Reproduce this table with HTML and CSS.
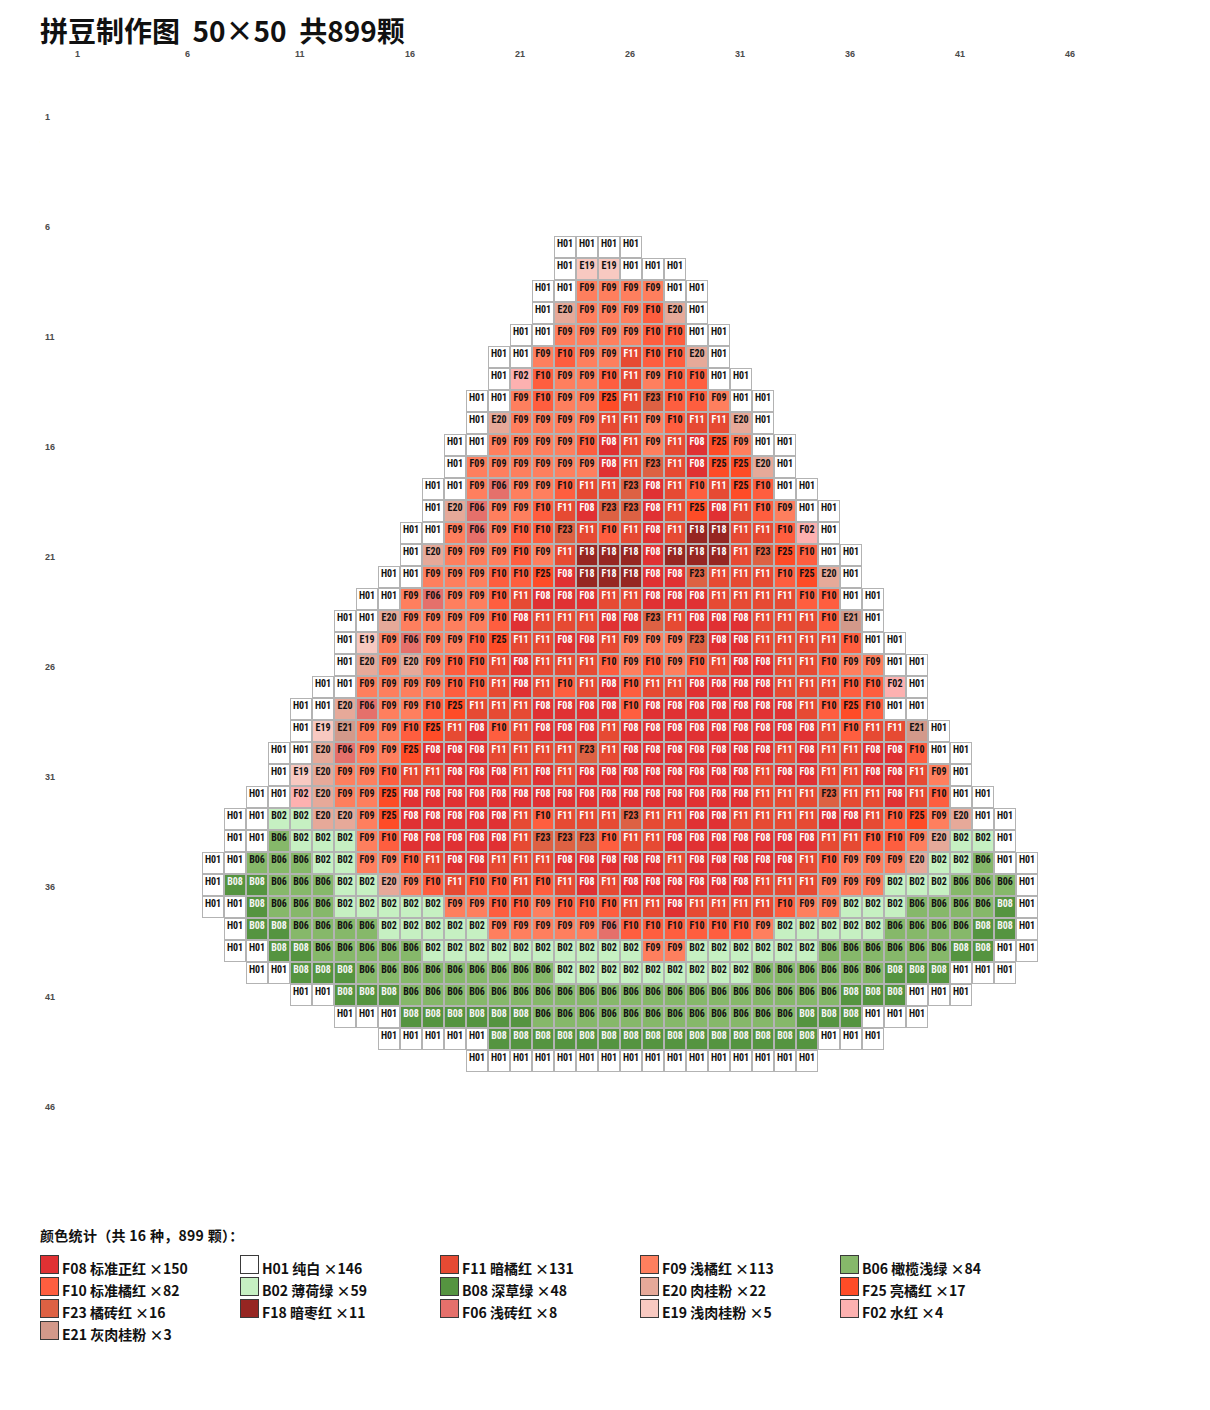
FILE: index.html
```html
<!DOCTYPE html>
<html lang="zh-CN">
<head>
<meta charset="utf-8">
<title>拼豆制作图</title>
<link rel="stylesheet" href="styles.css">
</head>
<body>
<main class="page">
  <h1 class="title">拼豆制作图  <span class="num">50×50</span>  共<span class="num">899</span>颗</h1>
  <div class="col-labels" id="colLabels"></div>
  <div class="board">
    <div class="row-labels" id="rowLabels"></div>
    <div class="grid" id="grid"></div>
  </div>
  <section class="legend">
    <h2 class="legend-title">颜色统计（共 16 种，899 颗）：</h2>
    <ul class="legend-list" id="legend"></ul>
  </section>
</main>
<script src="app.js"></script>
</body>
</html>
```

FILE: styles.css
```css
body {
  margin: 0;
  background: #ffffff;
  color: #111111;
  font-family: "Noto Sans CJK SC", "Noto Sans", sans-serif;
}

.page {
  padding: 14px 0 0 40px;
  width: 1140px;
}

.title {
  margin: 0;
  padding-top: 3px;
  height: 31px;
  font-family: "Liberation Sans", "Noto Sans CJK SC", sans-serif;
  font-size: 28px;
  line-height: 30px;
  font-weight: 700;
  color: #111111;
  white-space: pre;
  word-spacing: -1.5px;
}

.title .num {
  font-family: "Noto Sans CJK SC", "Noto Sans", sans-serif;
  line-height: 26px;
}

.col-labels {
  display: flex;
  margin-left: 30px;
  height: 12px;
}

.col-label {
  width: 110px;
  flex: none;
  box-sizing: border-box;
  padding-left: 5px;
  font: 700 9px/12px "Liberation Sans", sans-serif;
  color: #4a4a4a;
}

.board {
  display: flex;
  margin-top: 44px;
}

.row-labels {
  width: 30px;
  flex: none;
  display: flex;
  flex-direction: column;
}

.row-label {
  height: 110px;
  box-sizing: border-box;
  padding: 2px 0 0 5px;
  font: 700 9px/22px "Liberation Sans", sans-serif;
  color: #4a4a4a;
}

.grid {
  display: grid;
  grid-template-columns: repeat(50, 22px);
  grid-auto-rows: 22px;
}

.cell {
  box-sizing: border-box;
  border: 1px solid #b3b3b3;
  font-family: "Liberation Sans Narrow", "Arial Narrow", "Roboto Condensed", "Liberation Sans", sans-serif;
  font-size: 10px;
  font-weight: 700;
  line-height: 13px;
  text-align: center;
  color: #111111;
  overflow: hidden;
  white-space: nowrap;
}

.cell.empty {
  border-color: transparent;
}

.c-F08 { background: #e03133; color: #ffffff; }
.c-H01 { background: #ffffff; }
.c-F11 { background: #e64a33; color: #ffffff; }
.c-F09 { background: #fe7f5e; }
.c-B06 { background: #86b86a; }
.c-F10 { background: #fe5e3f; }
.c-B02 { background: #c6f0c2; }
.c-B08 { background: #559440; color: #f4f4f4; }
.c-E20 { background: #e6a999; }
.c-F25 { background: #fe4c27; }
.c-F23 { background: #dd6143; }
.c-F18 { background: #962622; color: #ffffff; }
.c-F06 { background: #e5706b; }
.c-E19 { background: #f8c9c1; }
.c-F02 { background: #fdb1b0; }
.c-E21 { background: #d3998a; }

.legend {
  margin-top: 21px;
}

.legend-title {
  margin: 0 0 9px;
  font-size: 14px;
  line-height: 20px;
  font-weight: 700;
  letter-spacing: 0.3px;
}

.legend-list {
  list-style: none;
  margin: 0;
  padding: 0;
  display: grid;
  grid-template-columns: repeat(5, 200px);
  grid-auto-rows: 22px;
}

.legend-item {
  display: flex;
  align-items: flex-start;
  font-size: 14px;
  font-weight: 700;
  white-space: nowrap;
}

.swatch {
  width: 19px;
  height: 19px;
  flex: none;
  box-sizing: border-box;
  margin-top: 1px;
  border: 1px solid #3a3a3a;
}

.legend-text {
  margin-left: 3px;
  padding-top: 6px;
  line-height: 16px;
}
```

FILE: app.js
```js
(function () {
  var PALETTE = [
    ["F08", "标准正红", 150], ["H01", "纯白", 146], ["F11", "暗橘红", 131], ["F09", "浅橘红", 113],
    ["B06", "橄榄浅绿", 84], ["F10", "标准橘红", 82], ["B02", "薄荷绿", 59], ["B08", "深草绿", 48],
    ["E20", "肉桂粉", 22], ["F25", "亮橘红", 17], ["F23", "橘砖红", 16], ["F18", "暗枣红", 11],
    ["F06", "浅砖红", 8], ["E19", "浅肉桂粉", 5], ["F02", "水红", 4], ["E21", "灰肉桂粉", 3]
  ];

  var ROWS = [
    [7, 23, "H01 H01 H01 H01"],
    [8, 23, "H01 E19 E19 H01 H01 H01"],
    [9, 22, "H01 H01 F09 F09 F09 F09 H01 H01"],
    [10, 22, "H01 E20 F09 F09 F09 F10 E20 H01"],
    [11, 21, "H01 H01 F09 F09 F09 F09 F10 F10 H01 H01"],
    [12, 20, "H01 H01 F09 F10 F09 F09 F11 F10 F10 E20 H01"],
    [13, 20, "H01 F02 F10 F09 F09 F10 F11 F09 F10 F10 H01 H01"],
    [14, 19, "H01 H01 F09 F10 F09 F09 F25 F11 F23 F10 F10 F09 H01 H01"],
    [15, 19, "H01 E20 F09 F09 F09 F09 F11 F11 F09 F10 F11 F11 E20 H01"],
    [16, 18, "H01 H01 F09 F09 F09 F09 F10 F08 F11 F09 F11 F08 F25 F09 H01 H01"],
    [17, 18, "H01 F09 F09 F09 F09 F09 F09 F08 F11 F23 F11 F08 F25 F25 E20 H01"],
    [18, 17, "H01 H01 F09 F06 F09 F09 F10 F11 F11 F23 F08 F11 F10 F11 F25 F10 H01 H01"],
    [19, 17, "H01 E20 F06 F09 F09 F10 F11 F08 F23 F23 F08 F11 F25 F08 F11 F10 F09 H01 H01"],
    [20, 16, "H01 H01 F09 F06 F09 F10 F10 F23 F11 F10 F11 F08 F11 F18 F18 F11 F11 F10 F02 H01"],
    [21, 16, "H01 E20 F09 F09 F09 F10 F09 F11 F18 F18 F18 F08 F18 F18 F18 F11 F23 F25 F10 H01 H01"],
    [22, 15, "H01 H01 F09 F09 F09 F10 F10 F25 F08 F18 F18 F18 F08 F08 F23 F11 F11 F11 F10 F25 E20 H01"],
    [23, 14, "H01 H01 F09 F06 F09 F09 F10 F11 F08 F08 F08 F11 F11 F08 F08 F08 F11 F11 F11 F11 F10 F10 H01 H01"],
    [24, 13, "H01 H01 E20 F09 F09 F09 F09 F10 F08 F11 F11 F11 F08 F08 F23 F11 F08 F08 F08 F11 F11 F11 F10 E21 H01"],
    [25, 13, "H01 E19 F09 F06 F09 F09 F10 F25 F11 F11 F08 F08 F11 F09 F09 F09 F23 F08 F08 F11 F11 F11 F11 F10 H01 H01"],
    [26, 13, "H01 E20 F09 E20 F09 F10 F10 F11 F08 F11 F11 F11 F10 F09 F10 F09 F10 F11 F08 F08 F11 F11 F10 F09 F09 H01 H01"],
    [27, 12, "H01 H01 F09 F09 F09 F09 F10 F10 F11 F08 F11 F10 F11 F08 F10 F11 F11 F08 F08 F08 F08 F11 F11 F11 F10 F10 F02 H01"],
    [28, 11, "H01 H01 E20 F06 F09 F09 F10 F25 F11 F11 F11 F08 F08 F08 F08 F10 F08 F08 F08 F08 F08 F08 F08 F11 F10 F25 F10 H01 H01"],
    [29, 11, "H01 E19 E21 F09 F09 F10 F25 F11 F08 F10 F11 F08 F08 F08 F11 F08 F08 F08 F08 F08 F08 F08 F08 F08 F11 F10 F11 F11 E21 H01"],
    [30, 10, "H01 H01 E20 F06 F09 F09 F25 F08 F08 F08 F11 F11 F11 F11 F23 F11 F08 F08 F08 F08 F08 F08 F08 F11 F08 F11 F11 F08 F08 F10 H01 H01"],
    [31, 10, "H01 E19 E20 F09 F09 F10 F11 F11 F08 F08 F08 F11 F08 F11 F08*8 F11 F08 F08 F11 F11 F08 F08 F11 F09 H01"],
    [32, 9, "H01 H01 F02 E20 F09 F09 F25 F08*16 F11 F11 F11 F23 F11 F11 F08 F11 F10 H01 H01"],
    [33, 8, "H01 H01 B02 B02 E20 E20 F09 F25 F08*5 F11 F10 F11 F11 F11 F23 F11 F11 F08 F08 F11 F11 F11 F11 F08 F08 F11 F10 F25 F09 E20 H01 H01"],
    [34, 8, "H01 H01 B06 B02 B02 B02 F09 F10 F08*5 F11 F23 F23 F23 F10 F11 F11 F08*7 F11 F11 F10 F10 F09 E20 B02 B02 H01"],
    [35, 7, "H01 H01 B06 B06 B06 B02 B02 F09 F09 F10 F11 F08 F08 F11 F11 F11 F08*5 F11 F08*5 F11 F10 F09 F09 F09 E20 B02 B02 B06 H01 H01"],
    [36, 7, "H01 B08 B08 B06 B06 B06 B02 B02 E20 F09 F10 F11 F10 F10 F11 F10 F11 F08 F11 F08*6 F11 F11 F11 F09 F09 F09 B02 B02 B02 B06 B06 B06 H01"],
    [37, 7, "H01 H01 B08 B06 B06 B06 B02*5 F09 F09 F10 F10 F09 F10 F10 F10 F11 F11 F08 F11 F11 F11 F11 F10 F09 F09 B02 B02 B02 B06*4 B08 H01"],
    [38, 8, "H01 B08 B08 B06*4 B02*5 F09*5 F06 F10*6 F09 B02*5 B06*4 B08 B08 H01"],
    [39, 8, "H01 H01 B08 B08 B06*5 B02*10 F09 F09 B02*6 B06*6 B08 B08 H01 H01"],
    [40, 9, "H01 H01 B08*3 B06*9 B02*9 B06*6 B08*3 H01*3"],
    [41, 11, "H01 H01 B08*3 B06*20 B08*3 H01*3"],
    [42, 13, "H01*3 B08*6 B06*12 B08*3 H01*3"],
    [43, 15, "H01*5 B08*15 H01*3"],
    [44, 19, "H01*16"]
  ];

  var SIZE = 50;
  var matrix = [];
  for (var i = 0; i < SIZE; i++) {
    matrix.push(new Array(SIZE).fill(null));
  }

  ROWS.forEach(function (row) {
    var r = row[0] - 1;
    var c = row[1] - 1;
    row[2].split(" ").forEach(function (tok) {
      var parts = tok.split("*");
      var n = parts.length > 1 ? parseInt(parts[1], 10) : 1;
      for (var k = 0; k < n; k++) {
        matrix[r][c] = parts[0];
        c++;
      }
    });
  });

  var grid = document.getElementById("grid");
  var frag = document.createDocumentFragment();
  for (var r = 0; r < SIZE; r++) {
    for (var c = 0; c < SIZE; c++) {
      var code = matrix[r][c];
      var cell = document.createElement("div");
      if (code) {
        cell.className = "cell c-" + code;
        cell.textContent = code;
      } else {
        cell.className = "cell empty";
      }
      frag.appendChild(cell);
    }
  }
  grid.appendChild(frag);

  var colLabels = document.getElementById("colLabels");
  var rowLabels = document.getElementById("rowLabels");
  for (var j = 0; j < SIZE; j += 5) {
    var cl = document.createElement("div");
    cl.className = "col-label";
    cl.textContent = String(j + 1);
    colLabels.appendChild(cl);
    var rl = document.createElement("div");
    rl.className = "row-label";
    rl.textContent = String(j + 1);
    rowLabels.appendChild(rl);
  }

  var legend = document.getElementById("legend");
  PALETTE.forEach(function (p) {
    var li = document.createElement("li");
    li.className = "legend-item";
    var sw = document.createElement("span");
    sw.className = "swatch c-" + p[0];
    var tx = document.createElement("span");
    tx.className = "legend-text";
    tx.textContent = p[0] + " " + p[1] + " ×" + p[2];
    li.appendChild(sw);
    li.appendChild(tx);
    legend.appendChild(li);
  });
})();
```
